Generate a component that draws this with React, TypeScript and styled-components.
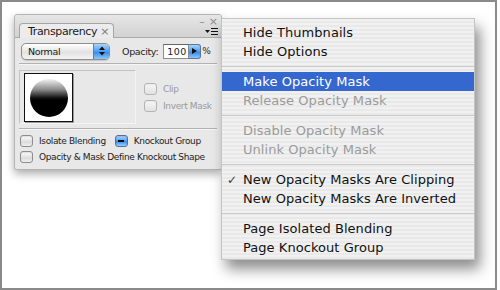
import React from "react";
import styled, { createGlobalStyle } from "styled-components";

const GlobalStyle = createGlobalStyle`
	html, body {
		margin: 0;
		padding: 0;
		background: #ffffff;
	}
	body {
		font-family: "DejaVu Sans", "Liberation Sans", sans-serif;
	}
`;

const Frame = styled.div`
	position: relative;
	box-sizing: border-box;
	width: 497px;
	height: 290px;
	border: 2px solid #8a8a8a;
	background: #ffffff;
	padding: 12px 0 0 12px;
`;

const Panel = styled.div`
	box-sizing: border-box;
	width: 208px;
	height: 156px;
	background: #e8e8e8;
	border: 1px solid #b4b4b4;
	border-radius: 3px 3px 2px 2px;
	box-shadow: 0 4px 9px rgba(0, 0, 0, 0.32);
	display: flex;
	flex-direction: column;
	overflow: hidden;
	white-space: nowrap;
`;

const Header = styled.div`
	height: 22px;
	display: flex;
	align-items: flex-end;
	padding-left: 4px;
	background: linear-gradient(#e6e6e6, #d2d2d2);
	border-bottom: 1px solid #a9a9a9;
`;

const Tab = styled.div`
	box-sizing: border-box;
	width: 95px;
	height: 15px;
	margin-bottom: -1px;
	display: flex;
	align-items: center;
	gap: 3px;
	padding: 0 4px 0 5px;
	background: #ececec;
	border: 1px solid #a5a5a5;
	border-bottom: none;
	border-radius: 4px 4px 0 0;
	font-size: 11px;
	color: #1a1a1a;
	letter-spacing: -0.35px;
`;

const TabClose = styled.span`
	margin-left: auto;
	color: #7a7a7a;
	font-size: 11px;
`;

const HeaderTools = styled.div`
	margin-left: auto;
	height: 100%;
	display: flex;
	flex-direction: column;
	justify-content: space-between;
	align-items: flex-end;
	padding: 1px 3px 1px 0;
	box-sizing: border-box;
`;

const WinButtons = styled.div`
	display: flex;
	gap: 4px;
	color: #8c8c8c;
	font-size: 11px;
	line-height: 11px;
`;

const Body = styled.div`
	flex: 1;
	display: flex;
	flex-direction: column;
	padding: 4px 4px 0 4px;
	font-size: 9px;
	letter-spacing: -0.35px;
	color: #1c1c1c;
`;

const TopRow = styled.div`
	height: 18px;
	display: flex;
	align-items: center;
	padding-left: 2px;
	font-size: 9.5px;
`;

const Select = styled.div`
	box-sizing: border-box;
	width: 89px;
	height: 17px;
	display: flex;
	align-items: stretch;
	border: 1px solid #8e8e8e;
	border-radius: 5px;
	overflow: hidden;
	background: linear-gradient(#ffffff, #e2e2e2 55%, #f4f4f4);
	box-shadow: 0 1px 1px rgba(0, 0, 0, 0.15);
`;

const SelectLabel = styled.span`
	flex: 1;
	display: flex;
	align-items: center;
	padding-left: 6px;
`;

const SelectArrows = styled.span`
	width: 15px;
	display: flex;
	align-items: center;
	justify-content: center;
	background: linear-gradient(#a9d4fb, #4a9bf0 50%, #2f86ea 51%, #8cc7fb);
	border-left: 1px solid #5d7fae;
`;

const Label = styled.span`
	margin-left: 12px;
`;

const NumberBox = styled.div`
	box-sizing: border-box;
	margin-left: 5px;
	width: 26px;
	height: 15px;
	background: #ffffff;
	border: 1px solid #8c8c8c;
	border-top-color: #666;
	display: flex;
	align-items: center;
	padding-left: 3px;
	letter-spacing: 0.4px;
`;

const ArrowButton = styled.span`
	box-sizing: border-box;
	width: 12px;
	height: 15px;
	display: flex;
	align-items: center;
	justify-content: center;
	background: linear-gradient(#a9d4fb, #4a9bf0 50%, #2f86ea 51%, #8cc7fb);
	border: 1px solid #5676a6;
	border-left: none;
	border-radius: 0 3px 3px 0;
`;

const Percent = styled.span`
	margin-left: 1px;
	color: #2a2a2a;
	font-size: 9px;
`;

const Rule = styled.div<{ $top: number; $bottom: number }>`
	height: 1px;
	background: #b2b2b2;
	border-bottom: 1px solid #f6f6f6;
	margin: ${(p) => p.$top}px 0 ${(p) => p.$bottom}px 0;
`;

const MaskRow = styled.div`
	display: flex;
	gap: 8px;
`;

const PreviewWell = styled.div`
	box-sizing: border-box;
	width: 117px;
	height: 54px;
	border: 1px solid #c2c2c2;
	border-right-color: #f4f4f4;
	border-bottom-color: #f4f4f4;
	padding: 2px 0 0 4px;
`;

const Thumb = styled.div`
	box-sizing: border-box;
	width: 49px;
	height: 49px;
	background: #ffffff;
	border: 1px solid #111;
	box-shadow: 1px 1px 0 #9a9a9a;
	display: flex;
	align-items: center;
	justify-content: center;
`;

const Disc = styled.div`
	width: 38px;
	height: 38px;
	border-radius: 50%;
	background: linear-gradient(#f2f2f2 0%, #8a8a8a 28%, #1a1a1a 48%, #000 55%, #000 100%);
`;

const MaskOptions = styled.div`
	display: flex;
	flex-direction: column;
	gap: 5px;
	padding-top: 13px;
`;

const CheckRow = styled.div<{ $disabled?: boolean }>`
	display: flex;
	align-items: center;
	gap: 6px;
	height: 12px;
	color: ${(p) => (p.$disabled ? "#9a9a9a" : "#1c1c1c")};
`;

const Box = styled.span<{ $state?: "off" | "mixed"; $disabled?: boolean }>`
	box-sizing: border-box;
	flex: none;
	width: 13px;
	height: 12px;
	border-radius: 3px;
	display: flex;
	align-items: center;
	justify-content: center;
	border: 1px solid ${(p) => (p.$state === "mixed" ? "#4f6f9f" : p.$disabled ? "#b5b5b5" : "#8d8d8d")};
	background: ${(p) =>
		p.$state === "mixed"
			? "linear-gradient(#b4dafc, #4b9cf1 50%, #2f86ea 51%, #9bd0fc)"
			: p.$disabled
				? "linear-gradient(#f6f6f6, #e2e2e2)"
				: "linear-gradient(#ffffff, #dcdcdc 60%, #efefef)"};
	box-shadow: inset 0 1px 1px rgba(0, 0, 0, ${(p) => (p.$disabled ? 0.05 : 0.12)});
`;

const Dash = styled.span`
	width: 6px;
	height: 2px;
	background: #0c0c0c;
`;

const OptionGrid = styled.div`
	display: flex;
	flex-direction: column;
	gap: 4px;
	padding-left: 1px;
`;

const OptionLine = styled.div`
	display: flex;
	gap: 9px;
`;

const Menu = styled.div`
	position: absolute;
	left: 219px;
	top: 16px;
	width: 254px;
	box-sizing: border-box;
	padding: 4px 0 2px;
	background: repeating-linear-gradient(#f1f1f1 0 2px, #e9e9e9 2px 4px);
	border: 1px solid #c4c4c4;
	box-shadow: 5px 9px 13px rgba(0, 0, 0, 0.45);
	font-size: 13px;
	letter-spacing: 0.05px;
	white-space: nowrap;
`;

const Item = styled.div<{ $active?: boolean; $disabled?: boolean }>`
	height: 19px;
	display: flex;
	align-items: center;
	color: ${(p) => (p.$active ? "#ffffff" : p.$disabled ? "#9b9b9b" : "#111111")};
	background: ${(p) => (p.$active ? "#3568cf" : "transparent")};
`;

const CheckCol = styled.span`
	width: 21px;
	box-sizing: border-box;
	padding-left: 5px;
	font-size: 12px;
	color: #3a3a3a;
`;

const Separator = styled.div`
	height: 11px;
	display: flex;
	align-items: center;

	&::after {
		content: "";
		flex: 1;
		height: 1px;
		background: #c9c9c9;
	}
`;

function UpDown() {
	return (
		<svg width="6" height="10" viewBox="0 0 6 10">
			<path d="M3 0.5 L6 4 H0 Z" fill="#111" />
			<path d="M3 9.5 L6 6 H0 Z" fill="#111" />
		</svg>
	);
}

function Collapse() {
	return (
		<svg width="7" height="8" viewBox="0 0 7 8">
			<path d="M3.5 0.8 L6.2 4 L3.5 7.2 L0.8 4 Z" fill="none" stroke="#555" strokeWidth="1" />
		</svg>
	);
}

function PanelMenuIcon() {
	return (
		<svg width="13" height="8" viewBox="0 0 13 8">
			<path d="M0 2 H5 L2.5 5 Z" fill="#111" />
			<path d="M6 0.5 H13 M6 3.5 H13 M6 6.5 H13" stroke="#111" strokeWidth="1.2" />
		</svg>
	);
}

function Check({ label, state = "off", disabled }: { label: string; state?: "off" | "mixed"; disabled?: boolean }) {
	return (
		<CheckRow $disabled={disabled}>
			<Box $state={state} $disabled={disabled}>
				{state === "mixed" && <Dash />}
			</Box>
			{label}
		</CheckRow>
	);
}

type Entry = { label?: string; active?: boolean; disabled?: boolean; checked?: boolean; sep?: boolean };

const entries: Entry[] = [
	{ label: "Hide Thumbnails" },
	{ label: "Hide Options" },
	{ sep: true },
	{ label: "Make Opacity Mask", active: true },
	{ label: "Release Opacity Mask", disabled: true },
	{ sep: true },
	{ label: "Disable Opacity Mask", disabled: true },
	{ label: "Unlink Opacity Mask", disabled: true },
	{ sep: true },
	{ label: "New Opacity Masks Are Clipping", checked: true },
	{ label: "New Opacity Masks Are Inverted" },
	{ sep: true },
	{ label: "Page Isolated Blending" },
	{ label: "Page Knockout Group" },
];

export default function App() {
	return (
		<>
			<GlobalStyle />
			<Frame>
				<Panel>
					<Header>
						<Tab>
							<Collapse />
							Transparency
							<TabClose>×</TabClose>
						</Tab>
						<HeaderTools>
							<WinButtons>
								<span>–</span>
								<span>×</span>
							</WinButtons>
							<PanelMenuIcon />
						</HeaderTools>
					</Header>
					<Body>
						<TopRow>
							<Select>
								<SelectLabel>Normal</SelectLabel>
								<SelectArrows>
									<UpDown />
								</SelectArrows>
							</Select>
							<Label>Opacity:</Label>
							<NumberBox>100</NumberBox>
							<ArrowButton>
								<svg width="5" height="6" viewBox="0 0 5 6">
									<path d="M0 0 L5 3 L0 6 Z" fill="#111" />
								</svg>
							</ArrowButton>
							<Percent>%</Percent>
						</TopRow>
						<Rule $top={3} $bottom={5} />
						<MaskRow>
							<PreviewWell>
								<Thumb>
									<Disc />
								</Thumb>
							</PreviewWell>
							<MaskOptions>
								<Check label="Clip" disabled />
								<Check label="Invert Mask" disabled />
							</MaskOptions>
						</MaskRow>
						<Rule $top={4} $bottom={5} />
						<OptionGrid>
							<OptionLine>
								<Check label="Isolate Blending" />
								<Check label="Knockout Group" state="mixed" />
							</OptionLine>
							<Check label="Opacity & Mask Define Knockout Shape" />
						</OptionGrid>
					</Body>
				</Panel>
				<Menu>
					{entries.map((e, i) =>
						e.sep ? (
							<Separator key={i} />
						) : (
							<Item key={i} $active={e.active} $disabled={e.disabled}>
								<CheckCol>{e.checked ? "✓" : ""}</CheckCol>
								{e.label}
							</Item>
						)
					)}
				</Menu>
			</Frame>
		</>
	);
}
